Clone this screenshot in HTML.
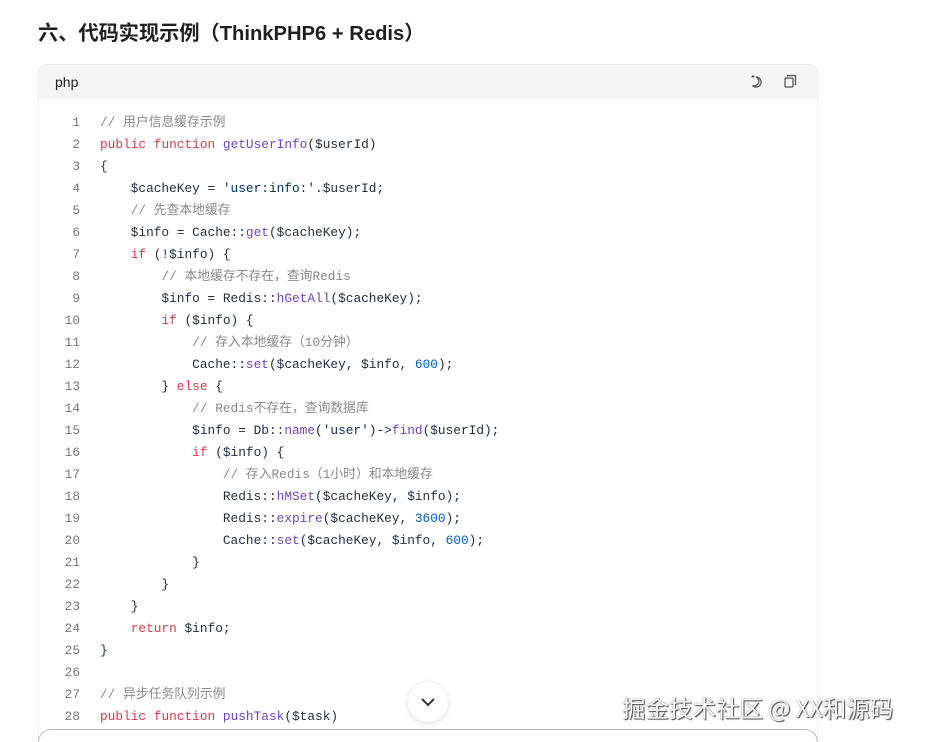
<!DOCTYPE html>
<html><head><meta charset="utf-8"><style>
*{margin:0;padding:0;box-sizing:border-box}
html,body{width:934px;height:742px;overflow:hidden}
body{background:#fff;font-family:"Liberation Sans","Noto Sans CJK SC",sans-serif;position:relative}
h2{position:absolute;left:38px;top:17px;font-size:20.2px;font-weight:bold;color:#1f1f1f;font-family:"Liberation Sans","Noto Sans CJK SC",sans-serif}
.card{position:absolute;left:38px;top:64px;width:780px;height:678px;border:1px solid #eee;border-bottom:none;border-radius:8px 8px 0 0;overflow:hidden}
.hd{height:34px;background:#f5f5f5;position:relative}
.hd span{position:absolute;left:16px;top:9px;font-size:14px;color:#222}
.ic{position:absolute;top:9px}
.code{position:absolute;left:0;top:47px;width:100%;font-family:"Liberation Mono","Noto Sans CJK SC",monospace;font-size:12.8px;color:#1f2a44}
.l{height:22px;line-height:22px;white-space:pre;position:relative}
.n{position:absolute;left:0;width:41px;text-align:right;color:#777}
.t{position:absolute;left:61px}
.c{color:#888}.k{color:#d73a49}.f{color:#6f42c1}.m{color:#005cc5}.s{color:#032f62}
.btn{position:absolute;left:408px;top:682px;width:40px;height:40px;border-radius:50%;background:#fff;box-shadow:0 1px 6px rgba(0,0,0,.15)}
.bot{position:absolute;left:38px;top:729px;width:780px;height:13px;border:1px solid #bbb;border-bottom:none;border-radius:14px 14px 0 0;background:#fff}
.wm{position:absolute;left:622px;top:690px;font-size:23.5px;color:#fff;text-shadow:0 0 1px #333,1px 1px 1px #444;font-family:"Noto Sans CJK SC",sans-serif;white-space:nowrap}
</style></head><body>
<h2>六、代码实现示例（ThinkPHP6 + Redis）</h2>
<div class="card">
<div class="hd"><span>php</span>
<svg class="ic" style="left:711px" width="14" height="14" viewBox="0 0 14 14" fill="none" stroke="#555" stroke-width="1.3"><path d="M6 3a5 5 0 1 1-3.5 8.5A4 4 0 0 0 6 3z"/><path d="M3 1v3M1.5 2.5h3" stroke-width="1"/></svg>
<svg class="ic" style="left:744px" width="14" height="14" viewBox="0 0 14 14" fill="none" stroke="#555" stroke-width="1.3"><rect x="2" y="4" width="8" height="9" rx="1"/><path d="M4.5 2.5V1.5h8v9h-1"/></svg>
</div>
<div class="code">
<div class="l"><span class="n">1</span><span class="t"><span class="c">// 用户信息缓存示例</span></span></div>
<div class="l"><span class="n">2</span><span class="t"><span class="k">public</span> <span class="k">function</span> <span class="f">getUserInfo</span>($userId)</span></div>
<div class="l"><span class="n">3</span><span class="t">{</span></div>
<div class="l"><span class="n">4</span><span class="t">    $cacheKey = <span class="s">'user:info:'</span>.$userId;</span></div>
<div class="l"><span class="n">5</span><span class="t">    <span class="c">// 先查本地缓存</span></span></div>
<div class="l"><span class="n">6</span><span class="t">    $info = Cache::<span class="f">get</span>($cacheKey);</span></div>
<div class="l"><span class="n">7</span><span class="t">    <span class="k">if</span> (!$info) {</span></div>
<div class="l"><span class="n">8</span><span class="t">        <span class="c">// 本地缓存不存在，查询Redis</span></span></div>
<div class="l"><span class="n">9</span><span class="t">        $info = Redis::<span class="f">hGetAll</span>($cacheKey);</span></div>
<div class="l"><span class="n">10</span><span class="t">        <span class="k">if</span> ($info) {</span></div>
<div class="l"><span class="n">11</span><span class="t">            <span class="c">// 存入本地缓存（10分钟）</span></span></div>
<div class="l"><span class="n">12</span><span class="t">            Cache::<span class="f">set</span>($cacheKey, $info, <span class="m">600</span>);</span></div>
<div class="l"><span class="n">13</span><span class="t">        } <span class="k">else</span> {</span></div>
<div class="l"><span class="n">14</span><span class="t">            <span class="c">// Redis不存在，查询数据库</span></span></div>
<div class="l"><span class="n">15</span><span class="t">            $info = Db::<span class="f">name</span>(<span class="s">'user'</span>)-&gt;<span class="f">find</span>($userId);</span></div>
<div class="l"><span class="n">16</span><span class="t">            <span class="k">if</span> ($info) {</span></div>
<div class="l"><span class="n">17</span><span class="t">                <span class="c">// 存入Redis（1小时）和本地缓存</span></span></div>
<div class="l"><span class="n">18</span><span class="t">                Redis::<span class="f">hMSet</span>($cacheKey, $info);</span></div>
<div class="l"><span class="n">19</span><span class="t">                Redis::<span class="f">expire</span>($cacheKey, <span class="m">3600</span>);</span></div>
<div class="l"><span class="n">20</span><span class="t">                Cache::<span class="f">set</span>($cacheKey, $info, <span class="m">600</span>);</span></div>
<div class="l"><span class="n">21</span><span class="t">            }</span></div>
<div class="l"><span class="n">22</span><span class="t">        }</span></div>
<div class="l"><span class="n">23</span><span class="t">    }</span></div>
<div class="l"><span class="n">24</span><span class="t">    <span class="k">return</span> $info;</span></div>
<div class="l"><span class="n">25</span><span class="t">}</span></div>
<div class="l"><span class="n">26</span><span class="t"></span></div>
<div class="l"><span class="n">27</span><span class="t"><span class="c">// 异步任务队列示例</span></span></div>
<div class="l"><span class="n">28</span><span class="t"><span class="k">public</span> <span class="k">function</span> <span class="f">pushTask</span>($task)</span></div>
</div>
</div>
<div class="bot"></div>
<div class="btn"><svg width="40" height="40" viewBox="0 0 40 40" fill="none" stroke="#333" stroke-width="2"><path d="M14 17l6 6 6-6"/></svg></div>
<div class="wm">掘金技术社区 @ XX和源码</div>
</body></html>
